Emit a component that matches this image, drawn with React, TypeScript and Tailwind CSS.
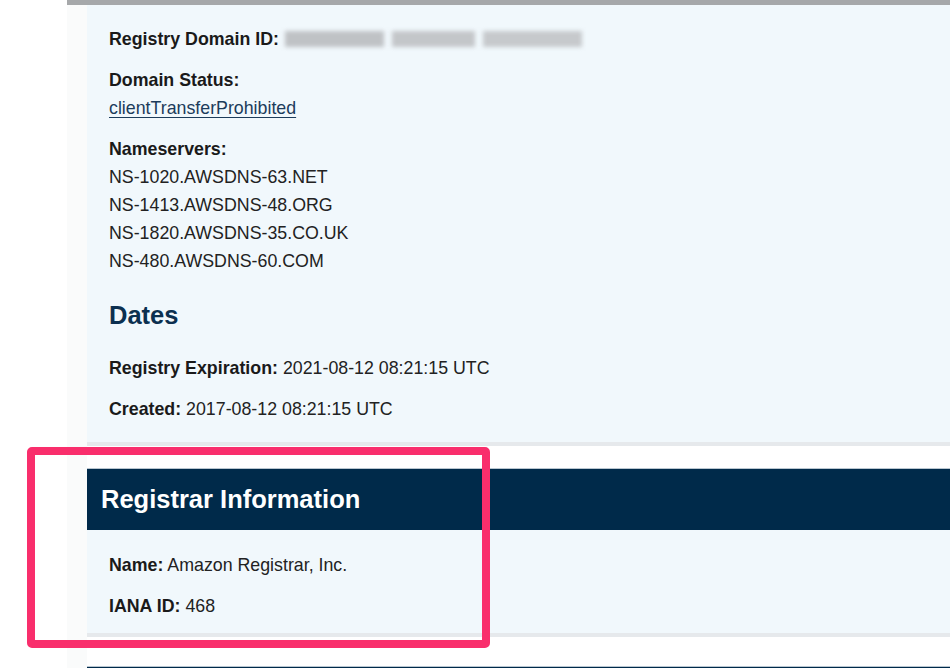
import React from "react";

const nameservers = [
  "NS-1020.AWSDNS-63.NET",
  "NS-1413.AWSDNS-48.ORG",
  "NS-1820.AWSDNS-35.CO.UK",
  "NS-480.AWSDNS-60.COM",
];

function Field({ label, children, last }: { label: string; children: React.ReactNode; last?: boolean }) {
  return (
    <p className={`leading-[28px] ${last ? "mb-0" : "mb-[13px]"}`}>
      <span className="font-bold text-[#1a1a1a]">{label}</span> {children}
    </p>
  );
}

function Blurred() {
  return (
    <span className="inline-flex items-center gap-[8px] align-middle -mt-[3px] ml-[1px]">
      <span className="block w-[99px] h-[16px] bg-[#bfc2c5] blur-[2px]" />
      <span className="block w-[83px] h-[16px] bg-[#c3c6c9] blur-[2px]" />
      <span className="block w-[99px] h-[16px] bg-[#c6c9cc] blur-[2px]" />
    </span>
  );
}

export default function App() {
  return (
    <div
      className="relative w-[950px] h-[668px] overflow-hidden bg-white text-[17.8px] text-[#222]"
      style={{ fontFamily: '"Liberation Sans", Arial, Helvetica, sans-serif' }}
    >
      <div className="ml-[67px] h-full border-t-[5px] border-[#a6a8aa] bg-[#fafbfb] pl-[20px]">
        <section className="bg-[#f1f8fc] pl-[22px] pt-[20px] pb-[19px] border-b-[4px] border-[#e6e9ec]">
          <Field label="Registry Domain ID:">
            <Blurred />
          </Field>
          <div className="mb-[13px] leading-[28px]">
            <div className="font-bold text-[#1a1a1a]">Domain Status:</div>
            <a className="text-[#1c3c5b] underline underline-offset-[3px] decoration-1">clientTransferProhibited</a>
          </div>
          <div className="mb-[13px] leading-[28px]">
            <div className="font-bold text-[#1a1a1a]">Nameservers:</div>
            {nameservers.map((ns) => (
              <div key={ns}>{ns}</div>
            ))}
          </div>
          <h2 className="mt-[25px] mb-[24px] text-[25.5px] leading-[30px] font-bold text-[#0c3050]">Dates</h2>
          <Field label="Registry Expiration:">2021-08-12 08:21:15 UTC</Field>
          <Field label="Created:" last>
            2017-08-12 08:21:15 UTC
          </Field>
        </section>

        <div className="h-[22px] bg-white" />

        <section>
          <div className="border-t border-[#b9c6d0] bg-[#002a4a] h-[62px] pl-[14px] flex items-center">
            <h2 className="text-[25.5px] font-bold text-white leading-none">Registrar Information</h2>
          </div>
          <div className="bg-[#f1f8fc] pl-[22px] pt-[21px] pb-[13px] border-b-[4px] border-[#e6e9ec]">
            <Field label="Name:">Amazon Registrar, Inc.</Field>
            <Field label="IANA ID:" last>
              468
            </Field>
          </div>
        </section>

        <div className="h-[29px] bg-white" />

        <div className="border-t border-[#b9c6d0] bg-[#002a4a] h-[62px]" />
      </div>

      <div className="absolute left-[27px] top-[447px] w-[463px] h-[201px] border-[8px] border-[#f92e6c] rounded-[5px]" />
    </div>
  );
}
